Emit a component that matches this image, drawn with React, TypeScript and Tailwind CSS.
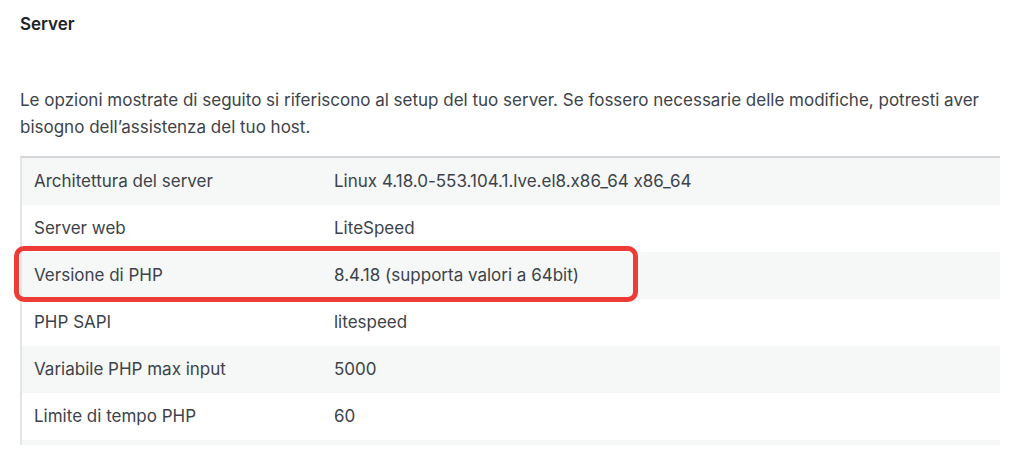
import React from "react";

const rows: [string, string][] = [
  ["Architettura del server", "Linux 4.18.0-553.104.1.lve.el8.x86_64 x86_64"],
  ["Server web", "LiteSpeed"],
  ["Versione di PHP", "8.4.18 (supporta valori a 64bit)"],
  ["PHP SAPI", "litespeed"],
  ["Variabile PHP max input", "5000"],
  ["Limite di tempo PHP", "60"],
];

const App: React.FC = () => {
  return (
    <div
      className="h-[457px] w-[1024px] overflow-hidden bg-white pl-5 text-[17px] text-[#3c434a] [font-feature-settings:'calt'_0]"
      style={{ fontFamily: "Inter, 'Noto Sans', sans-serif" }}
    >
      <h2 className="pt-[12px] text-[17px] font-semibold leading-[24px] text-[#1d2327]">Server</h2>
      <p className="mt-[51px] w-[980px] leading-[27px]">
        Le opzioni mostrate di seguito si riferiscono al setup del tuo server. Se fossero necessarie delle
        modifiche, potresti aver bisogno dell’assistenza del tuo host.
      </p>
      <div className="relative mt-[15px] w-[980px] border-t-2 border-l-2 border-t-[#d4d5d8] border-l-[#e4e5e7]">
        {rows.map(([label, value], i) => (
          <div
            key={label}
            className={`flex h-[47px] items-center ${i % 2 === 0 ? "bg-[#f6f7f7]" : "bg-white"}`}
          >
            <div className="w-[312px] pl-3">{label}</div>
            <div>{value}</div>
          </div>
        ))}
        <div className="h-[5px] bg-[#f6f7f7]" />
        <div className="pointer-events-none absolute left-[-8px] top-[88px] h-[56px] w-[624px] rounded-[10px] border-[5px] border-[#ec3c35]" />
      </div>
    </div>
  );
};

export default App;
